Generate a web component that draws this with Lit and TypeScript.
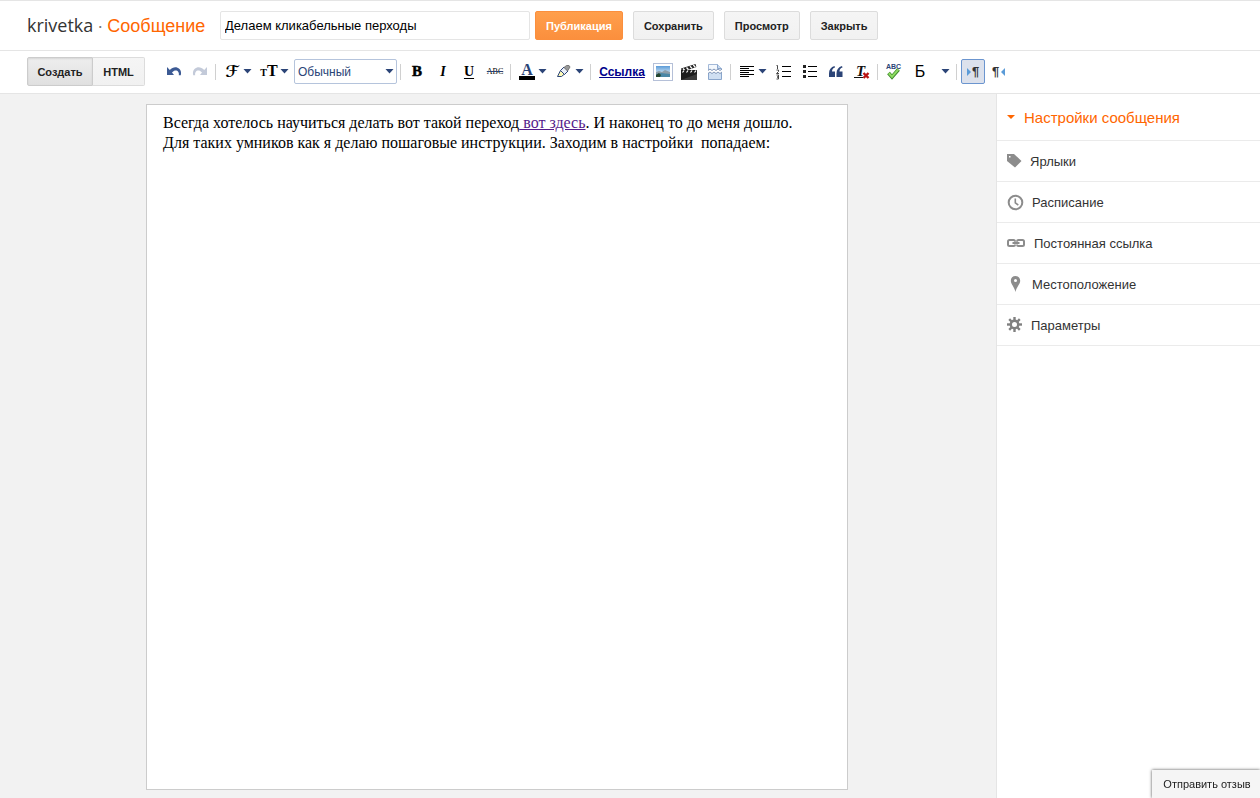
import { LitElement, html, svg, css, TemplateResult } from "lit";
import { customElement, property, state } from "lit/decorators.js";

const icon = (w: number, h: number, body: TemplateResult) =>
  html`<svg width=${w} height=${h} viewBox="0 0 ${w} ${h}" aria-hidden="true">${body}</svg>`;

const caret = html`<svg class="caret" width="9" height="5" viewBox="0 0 9 5" aria-hidden="true">
  <path d="M0.500 0h8L4.500 4.600z" fill="#2b4477" />
</svg>`;

const icons = {
  undo: icon(16, 16, svg`<path d="M1 3v8h7L6 8.600C8.200 6 11 6 12.300 8c.6 1 .7 2 .5 3.200h2C15.400 8.500 15 6.500 13.500 5 10.500 2.300 6.800 3 3.800 5.900z" fill="#3c5a94"/>`),
  redo: icon(16, 16, svg`<path d="M15 3v8H8l2-2.400C7.800 6 5 6 3.700 8c-.6 1-.7 2-.5 3.200h-2C.6 8.500 1 6.500 2.500 5 5.500 2.300 9.200 3 12.200 5.900z" fill="#c3cad9"/>`),
  image: icon(20, 20, svg`<defs><linearGradient id="sky" x2="0" y2="1"><stop offset="0" stop-color="#5b9bd8"/><stop offset=".6" stop-color="#c4def2"/></linearGradient></defs>
    <rect x=".5" y="1.500" width="19" height="17" fill="#fff" stroke="#b5c0d8"/>
    <rect x="3" y="4" width="14" height="11" fill="url(#sky)"/>
    <path d="M3 10l3-1 3 1 3-2 5 2v2H3z" fill="#8d9da8"/><path d="M3 12l5-1 9 1v3H3z" fill="#4b87a5"/><path d="M3 13l3-2 2 2-1 2H3z" fill="#24452f"/>`),
  clapper: icon(16, 16, svg`<path d="M0 4.500L14.500 0l.9 3L1 8z" fill="#222"/>
    <path d="M2 4.500l1.800 2M5.500 3.500l2 2.200M9 2.200l2 2.200M12.300 1l2 2.200" stroke="#fff" stroke-width="1.300"/>
    <rect y="6" width="16" height="10" fill="#1d1d1d"/><path d="M3 6.500l-1.500 2M7 6.500l-1.500 2M11 6.500l-1.500 2M15 6.500l-1.500 2" stroke="#fff" stroke-width="1.200"/><path d="M0 16l16-6v6z" fill="#3a3a3a"/>`),
  pageBreak: icon(14, 16, svg`<path d="M.5 6V.5h9l4 4V6" fill="#f4f8fd" stroke="#a3b9d8"/><path d="M.5 9v6.500h13V9" fill="#cfdff2" stroke="#8aa6cc"/>
    <path d="M9.500.5v4h4" fill="#c8daf0" stroke="#8aa6cc"/>
    <path d="M0 6.500l2-1.500 2 1.500 2-1.500 2 1.500 2-1.500 2 1.500 2-1.500M0 9.500l2-1.500 2 1.500 2-1.500 2 1.500 2-1.500 2 1.500 2-1.500" fill="none" stroke="#8096b8"/>`),
  align: icon(16, 14, svg`<path d="M1 1.500h14M1 3.500h9M1 5.500h14M1 7.500h9M1 9.500h14M1 11.500h9" stroke="#000" shape-rendering="crispEdges"/>`),
  ol: icon(16, 16, svg`<path d="M6 2.500h9M6 7.500h9M6 12.500h9" stroke="#000" shape-rendering="crispEdges"/>
    <path d="M.5 1.500h1V5M.5 6h2v1.500l-2 2h2.500M.5 11h2v2h-1.500 1.500v2h-2" fill="none" stroke="#333" stroke-width=".9"/>`),
  ul: icon(16, 16, svg`<path d="M6 2.500h9M6 7.500h9M6 12.500h9" stroke="#000" shape-rendering="crispEdges"/>
    <path d="M1 1h3v3H1zM1 6h3v3H1zM1 11h3v3H1z" fill="#222"/>`),
  quote: icon(16, 14, svg`<path d="M6.500 1C3 2 1 4.600 1 8.500V12h6V6.500H4C4 4.600 5 3.200 7 2.600zM14 1c-3.500 1-5.500 3.600-5.500 7.500V12h6V6.500h-3c0-1.900 1-3.300 3-3.900z" fill="#2b4477"/>`),
  marker: icon(16, 16, svg`<path d="M1.500 12.500L4.500 6.500l4 3.500-3 2.500z" fill="#fffbb8" stroke="#2b4477"/>
    <path d="M4.500 6.500L8 3l4 4-3.500 3.500z" fill="#e9eef8" stroke="#2b4477"/><path d="M8 3.500L10.500 1.500H13l1 1.500L11.500 7z" fill="#999" stroke="#777"/>`),
};

const sideIcons = {
  tag: icon(15, 16, svg`<path fill-rule="evenodd" d="M0 1h7l7.500 7L8 14.500 0 8zM2 3v1.500h1.500V3z" fill="#8c8c8c"/>`),
  clock: icon(17, 17, svg`<circle cx="8.500" cy="8.500" r="6.800" fill="none" stroke="#8c8c8c" stroke-width="2"/><path d="M8.300 4.500v4.300l3 2.300" fill="none" stroke="#8c8c8c" stroke-width="1.600"/>`),
  link: icon(19, 9, svg`<path d="M8 2.800V2.500Q8 1 6.500 1h-4Q1 1 1 2.500v3Q1 7 2.500 7h4Q8 7 8 5.500M10 2.800V2.500Q10 1 11.500 1h4Q17 1 17 2.500v3Q17 7 15.500 7h-4Q10 7 10 5.500M5.500 4h7" fill="none" stroke="#8c8c8c" stroke-width="2"/>`),
  pin: icon(17, 18, svg`<path fill-rule="evenodd" d="M8.500 1C5.700 1 3.800 3 3.800 5.700 3.800 9 7.500 12 8.500 17 9.500 12 13.200 9 13.200 5.700 13.200 3 11.300 1 8.500 1zm0 3a1.500 1.500 0 1 1 0 3 1.500 1.500 0 0 1 0-3z" fill="#8c8c8c"/>`),
  gear: icon(16, 16, svg`<circle cx="7.500" cy="7.500" r="3.700" fill="none" stroke="#808080" stroke-width="2.400"/>
    ${[0, 45, 90, 135, 180, 225, 270, 315].map((a) => svg`<rect x="6.300" y="0" width="2.400" height="3.600" fill="#808080" transform="rotate(${a} 7.500 7.500)"/>`)}`),
};

@customElement("tool-button")
class ToolButton extends LitElement {
  @property() label = "";
  @property({ type: Boolean }) menu = false;
  @property({ type: Boolean }) wide = false;
  @property({ type: Boolean }) pressed = false;

  static styles = css`
    :host { display: block; flex: none; }
    button {
      display: flex; align-items: center; justify-content: center;
      box-sizing: border-box; width: 26px; height: 25px; padding: 0;
      border: 0; background: none; color: #000; cursor: pointer;
      font: 16px "Liberation Serif", serif;
    }
    .menu { width: 37px; gap: 3px; padding: 0 4px 0 5px; }
    .wide { width: 47px; gap: 13px; }
    .pressed { width: 24px; margin-left: 1px; border: 1px solid #6b95cf; border-radius: 2px; background: #dce1ec; }
    .glyph { display: flex; justify-content: center; width: 16px; flex: none; }
    .caret { flex: none; }
  `;

  render() {
    const cls = [this.menu ? "menu" : "", this.wide ? "wide" : "", this.pressed ? "pressed" : ""].join(" ");
    return html`<button class=${cls} type="button" title=${this.label} aria-label=${this.label}>
      <span class="glyph"><slot></slot></span>${this.menu ? caret : ""}
    </button>`;
  }
}

@customElement("app-root")
class AppRoot extends LitElement {
  @state() private mode = "compose";

  static styles = css`
    :host {
      display: flex; flex-direction: column; min-height: 100vh; box-sizing: border-box;
      border-top: 1px solid #e5e5e5; background: #fff; color: #333;
      font: 13px/16px "Liberation Sans", Arial, sans-serif;
    }
    * { box-sizing: border-box; }
    header { display: flex; align-items: center; height: 50px; padding-left: 27px; border-bottom: 1px solid #e5e5e5; }
    h1 { display: flex; gap: 4px; align-items: baseline; width: 193px; margin: 0; font-size: 18px; line-height: 24px; font-weight: 400; color: #f60; white-space: nowrap; }
    .blog { color: #333; font-family: "Open Sans", sans-serif; }
    .dot { color: #777; }
    .title { width: 310px; height: 29px; margin-right: 5px; padding: 0 4px; border: 1px solid #e5e5e5; border-radius: 2px; background: #fff; color: #000; font: 13px "Liberation Sans", Arial, sans-serif; }
    .actions { display: flex; gap: 10px; }
    .btn { height: 29px; padding: 0 10px; border: 1px solid #dcdcdc; border-radius: 2px; background: linear-gradient(#f5f5f5, #f1f1f1); color: #222; font: bold 11px "Liberation Sans", Arial, sans-serif; }
    .primary { border-color: #fb8f3d; background: linear-gradient(#ff9f4c, #fb8f3d); color: #fff; }
    .toolbar { display: flex; align-items: center; height: 43px; padding: 0 0 1px 27px; border-bottom: 1px solid #e5e5e5; }
    .modes { display: flex; margin-right: 16px; }
    .modes .btn:first-child { width: 66px; border-radius: 2px 0 0 2px; }
    .modes .btn:last-child { width: 52px; border-left: 0; border-radius: 0 2px 2px 0; }
    .modes .btn { padding: 0; }
    .modes .on { border-color: #ccc; background: linear-gradient(#eee, #e0e0e0); box-shadow: inset 0 1px 2px rgba(0, 0, 0, 0.1); }
    .sep { flex: none; width: 1px; height: 16px; margin: 0 3px 0 2px; background: #d0d0d0; }
    .format { display: grid; align-items: center; width: 103px; margin: 0 1px; }
    .format > * { grid-area: 1 / 1; }
    .format select { appearance: none; width: 100%; height: 25px; padding: 0 3px; border: 1px solid #b5c4dc; border-radius: 2px; background: #fff; color: #2b4477; font: 12px "Liberation Sans", Arial, sans-serif; }
    .format .caret { justify-self: end; margin-right: 3px; pointer-events: none; }
    .link { width: 56px; padding: 0; border: 0; background: none; color: #00008b; font: bold 12px "Liberation Sans", Arial, sans-serif; text-decoration: underline; }
    svg { flex: none; display: block; overflow: visible; }
    .script { font: bold 16px "DejaVu Serif", "DejaVu Sans", serif; }
    .size { font: bold 16px/20px "Liberation Serif", serif; }
    .size small { font-size: 10px; }
    .b { font: bold 15px "Liberation Serif", serif; -webkit-text-stroke: 0.5px #000; }
    .i { font: italic bold 14px "Liberation Serif", serif; }
    .u { font: bold 14px "Liberation Serif", serif; text-decoration: underline; text-underline-offset: 2px; }
    .s { font: 8px "Liberation Serif", serif; color: #000; text-decoration: line-through #2b4477; }
    .color { width: 16px; height: 17px; border-bottom: 4px solid #000; color: #2b4477; font: bold 16px/13px "Liberation Serif", serif; text-align: center; }
    .cyr { font: 16px "Liberation Sans", sans-serif; }
    .work { display: flex; flex: 1; }
    main { display: flex; justify-content: center; flex: 1; min-width: 0; padding: 10px 10px 8px 8px; background: #f2f2f2; }
    .sheet { width: 100%; max-width: 702px; padding: 8px 16px; border: 1px solid #ccc; background: #fff; color: #000; font: 16px/20px "Liberation Serif", "Times New Roman", serif; white-space: pre-wrap; outline: none; }
    .sheet p { margin: 0; }
    .sheet a { color: #551a8b; }
    aside { width: 264px; flex: none; border-left: 1px solid #e5e5e5; }
    .side-head, .row { display: flex; align-items: center; gap: 8px; width: 100%; height: 41px; padding: 0 10px; border: 0; border-bottom: 1px solid #ebebeb; background: #fff; color: #333; font: 13px "Liberation Sans", Arial, sans-serif; text-align: left; }
    h2 { margin: 0; }
    .side-head { height: 47px; color: #f60; font-size: 15px; }
    .feedback { position: fixed; right: 0; bottom: 0; min-width: 108px; height: 28px; padding: 0 7px 0 9px; border: 0; background: #f5f5f5; color: #222; box-shadow: 0 0 3px rgba(0, 0, 0, 0.7); font: 11px "Liberation Sans", Arial, sans-serif; }
  `;

  private mark(flip: boolean) {
    return icon(16, 16, svg`<path d=${flip ? "M15 4v8l-4-4z" : "M2 4v8l4-4z"} fill="#5b9bd8"/>
      <text x=${flip ? 2 : 7} y="12" font-family="Liberation Sans" font-weight="bold" font-size="13" fill="#333">¶</text>`);
  }

  render() {
    const sep = html`<span class="sep"></span>`;
    const rows: [TemplateResult, string][] = [
      [sideIcons.tag, "Ярлыки"],
      [sideIcons.clock, "Расписание"],
      [sideIcons.link, "Постоянная ссылка"],
      [sideIcons.pin, "Местоположение"],
      [sideIcons.gear, "Параметры"],
    ];
    return html`
      <header>
        <h1><span class="blog">krivetka</span><span class="dot">·</span><span>Сообщение</span></h1>
        <input class="title" type="text" aria-label="Название" .value=${"Делаем кликабельные перходы"} />
        <div class="actions">
          <button class="btn primary">Публикация</button>
          <button class="btn">Сохранить</button>
          <button class="btn">Просмотр</button>
          <button class="btn">Закрыть</button>
        </div>
      </header>
      <div class="toolbar">
        <div class="modes">
          <button class="btn ${this.mode === "compose" ? "on" : ""}" @click=${() => (this.mode = "compose")}>Создать</button>
          <button class="btn ${this.mode === "html" ? "on" : ""}" @click=${() => (this.mode = "html")}>HTML</button>
        </div>
        <tool-button label="Отменить">${icons.undo}</tool-button>
        <tool-button label="Повторить">${icons.redo}</tool-button>
        ${sep}
        <tool-button menu label="Шрифт"><span class="script">ℱ</span></tool-button>
        <tool-button menu label="Размер"><span class="size"><small>T</small>T</span></tool-button>
        <div class="format">
          <select aria-label="Формат"><option>Обычный</option></select>
          ${caret}
        </div>
        ${sep}
        <tool-button label="Полужирный"><span class="b">B</span></tool-button>
        <tool-button label="Курсив"><span class="i">I</span></tool-button>
        <tool-button label="Подчеркнутый"><span class="u">U</span></tool-button>
        <tool-button label="Зачеркнутый"><span class="s">ABC</span></tool-button>
        ${sep}
        <tool-button menu label="Цвет текста"><span class="color">A</span></tool-button>
        <tool-button menu label="Цвет фона">${icons.marker}</tool-button>
        ${sep}
        <button class="link">Ссылка</button>
        <tool-button label="Изображение">${icons.image}</tool-button>
        <tool-button label="Видео">${icons.clapper}</tool-button>
        <tool-button label="Разрыв">${icons.pageBreak}</tool-button>
        ${sep}
        <tool-button menu label="Выравнивание">${icons.align}</tool-button>
        <tool-button label="Нумерованный список">${icons.ol}</tool-button>
        <tool-button label="Маркированный список">${icons.ul}</tool-button>
        <tool-button label="Цитата">${icons.quote}</tool-button>
        <tool-button label="Очистить формат">${icon(16, 16, svg`
          <text x="2" y="12" font-family="Liberation Serif" font-style="italic" font-weight="bold" font-size="15" fill="#111">T</text>
          <path d="M0 13.500h9" stroke="#111"/><path d="M9.500 9l5 5M14.500 9l-5 5" stroke="#b81414" stroke-width="2.400"/>`)}</tool-button>
        ${sep}
        <tool-button label="Орфография">${icon(16, 16, svg`
          <text x="0" y="5" font-family="Liberation Sans" font-weight="bold" font-size="7" fill="#2b4477">ABC</text>
          <path d="M2.500 9l3.500 4 6.500-7.500" fill="none" stroke="#3d8a2a" stroke-width="3.600"/><path d="M2.800 9.300l3.200 3.400 6.200-7" fill="none" stroke="#8fdc63" stroke-width="2"/>`)}</tool-button>
        <tool-button menu wide label="Транслитерация"><span class="cyr">Б</span></tool-button>
        ${sep}
        <tool-button pressed label="Слева направо">${this.mark(false)}</tool-button>
        <tool-button label="Справа налево">${this.mark(true)}</tool-button>
      </div>
      <div class="work">
        <main>
          <div class="sheet" contenteditable="true" role="textbox" aria-label="Текст сообщения"><p>Всегда хотелось научиться делать вот такой переход<a href="#"> вот здесь</a>. И наконец то до меня дошло.</p><p>Для таких умников как я делаю пошаговые инструкции. Заходим в настройки  попадаем:</p></div>
        </main>
        <aside>
          <h2><button class="side-head">${icon(9, 5, svg`<path d="M0 0h8L4 4z" fill="#f60"/>`)}Настройки сообщения</button></h2>
          ${rows.map(([i, t]) => html`<button class="row">${i}<span>${t}</span></button>`)}
        </aside>
      </div>
      <button class="feedback">Отправить отзыв</button>
    `;
  }
}
